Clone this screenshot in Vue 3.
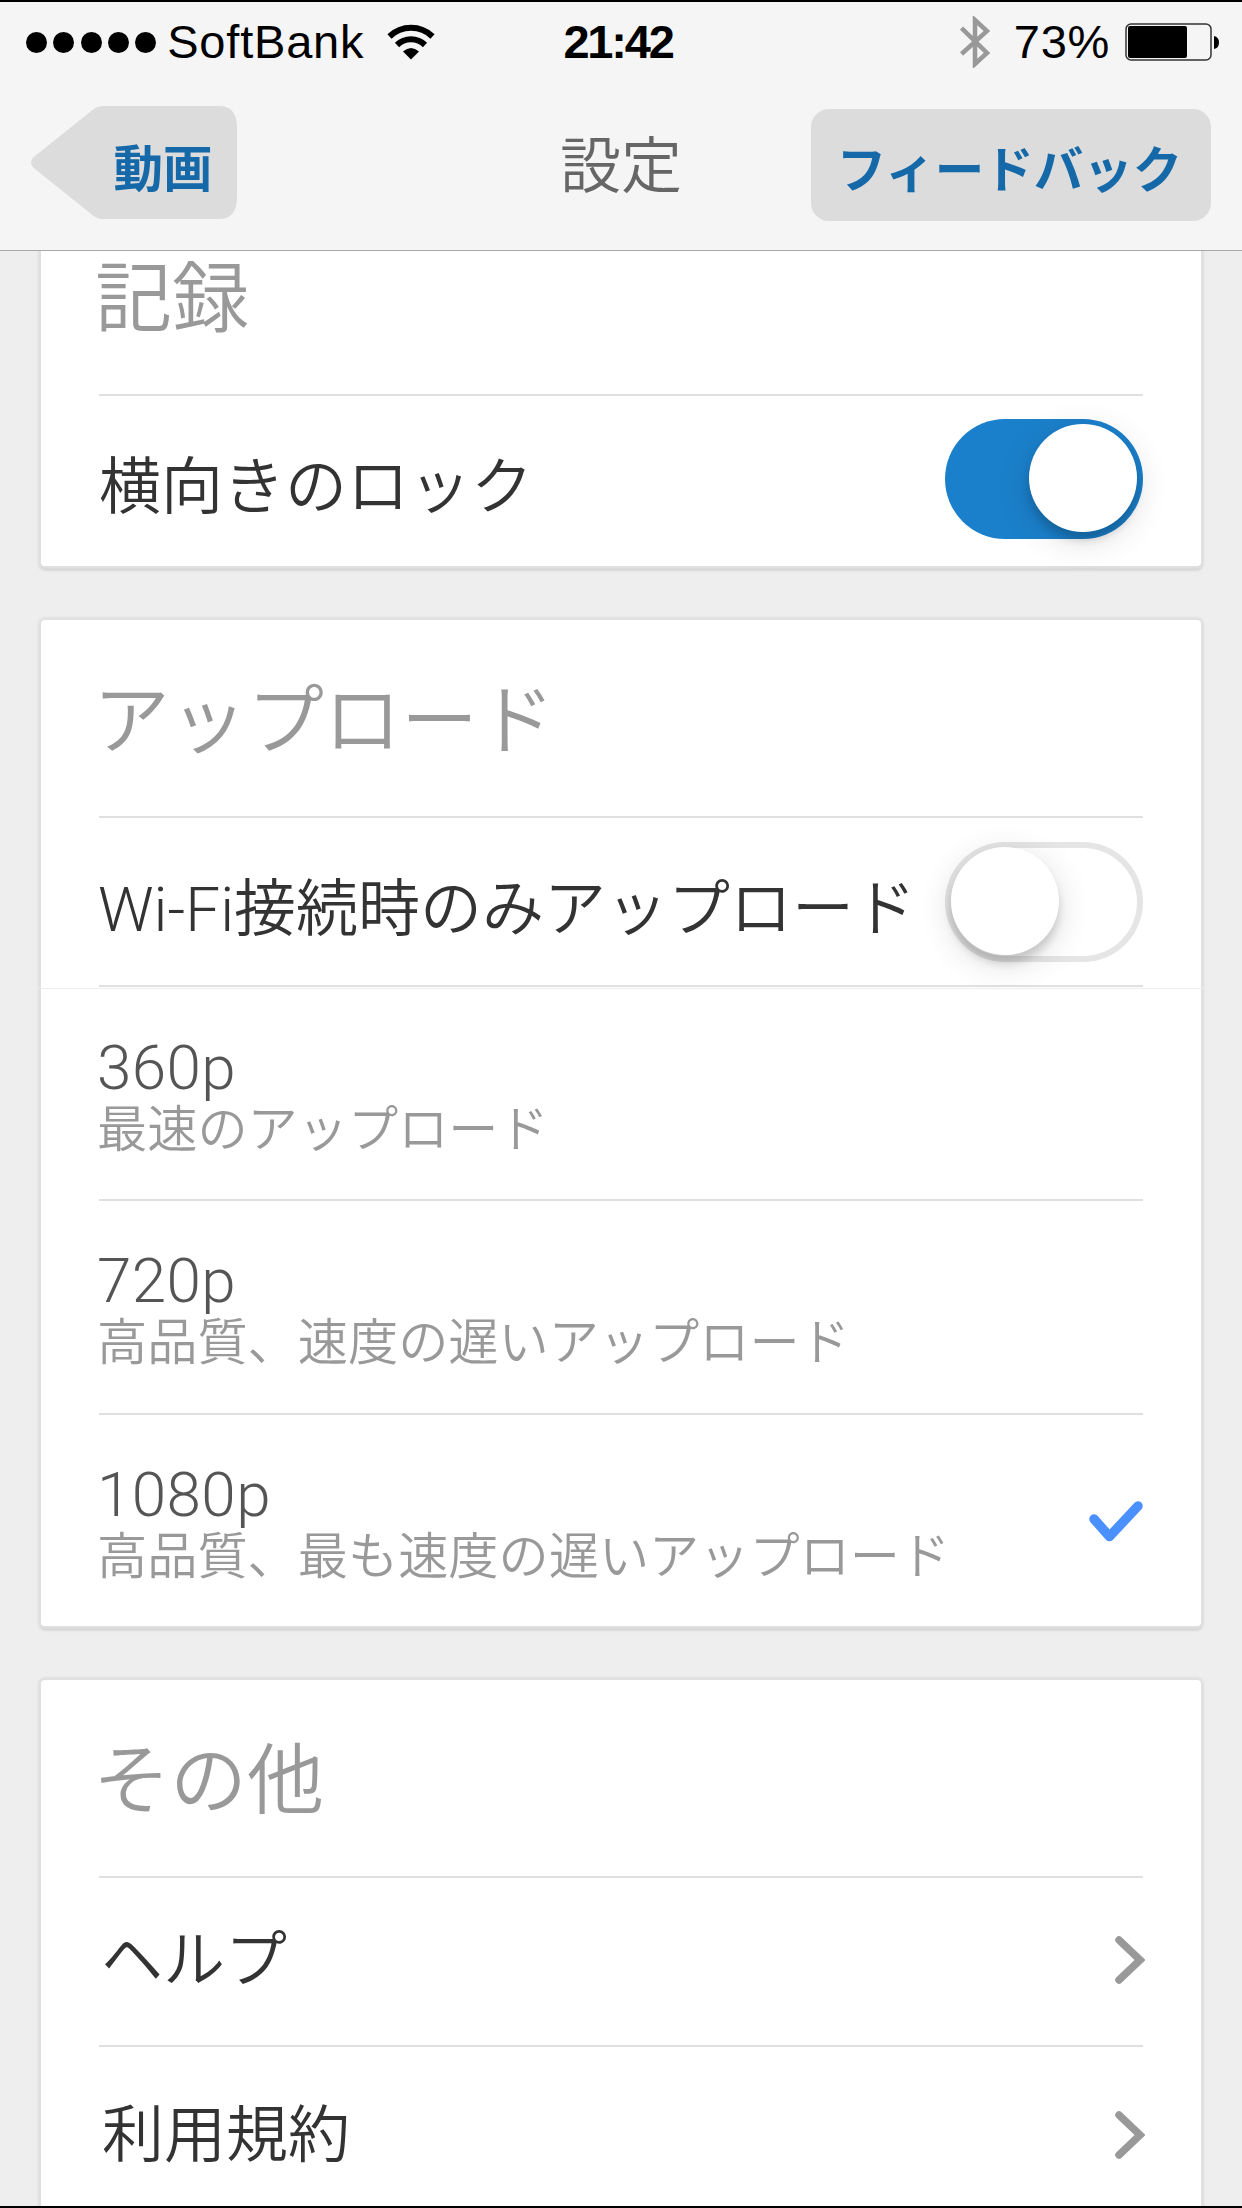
<script setup>
    import {ref} from 'vue'

    const lockLandscape = ref(true)
    const wifiOnly = ref(false)
    const quality = ref('1080p')

    const qualities = [
        {name: '360p', note: '最速のアップロード'},
        {name: '720p', note: '高品質、速度の遅いアップロード'},
        {name: '1080p', note: '高品質、最も速度の遅いアップロード'}
    ]
    const links = ['ヘルプ', '利用規約']
</script>

<template>
    <div class="screen">
        <header>
            <div class="status">
                <div class="carrier">
                    <div class="dots">
                        <i v-for="n in 5" :key="n"></i>
                    </div>
                    <span>SoftBank</span>
                    <svg class="wifi" width="48" height="36" viewBox="0 0 48 36">
                        <path d="M2.500 12.500 A31 31 0 0 1 45.500 12.500" />
                        <path d="M10 21 A20 20 0 0 1 38 21" />
                        <path class="fill" d="M16 27.500 Q24 20.500 32 27.500 L24 35.500 Z" />
                    </svg>
                </div>
                <span class="time">21:42</span>
                <div class="power">
                    <svg class="bluetooth" width="30" height="52" viewBox="0 0 30 52">
                        <path d="M1.500 12 L27 37 L15 48 V4 L27 15 L1.500 38" />
                    </svg>
                    <span>73%</span>
                    <svg width="96" height="38" viewBox="0 0 96 38">
                        <rect x="1" y="1" width="85" height="36" rx="5" fill="none" stroke="#333" stroke-width="1.500" />
                        <rect x="3" y="3" width="59" height="32" rx="2" />
                        <path d="M89 13 Q94 14 94 19.500 Q94 25 89 26 Z" />
                    </svg>
                </div>
            </div>
            <nav>
                <button class="back">
                    <svg width="206" height="113" viewBox="0 0 206 113">
                        <path d="M72 0 H188 Q206 0 206 22 V91 Q206 113 188 113 H72 Q65 113 59 107 L4 63 Q-4 56.500 4 50 L59 6 Q65 0 72 0 Z" fill="#dcdcdc" />
                    </svg>
                    <span>動画</span>
                </button>
                <h1>設定</h1>
                <button class="feedback">フィードバック</button>
            </nav>
        </header>

        <main>
            <section class="card">
                <h2>記録</h2>
                <div class="row">
                    <span>横向きのロック</span>
                    <div class="toggle" :class="{ on: lockLandscape }" @click="lockLandscape = !lockLandscape"><i></i></div>
                </div>
            </section>

            <section class="card">
                <h2>アップロード</h2>
                <div class="row wifi-only">
                    <span>Wi-Fi接続時のみアップロード</span>
                    <div class="toggle" :class="{ on: wifiOnly }" @click="wifiOnly = !wifiOnly"><i></i></div>
                </div>
                <ul>
                    <li v-for="q in qualities" :key="q.name" @click="quality = q.name">
                        <div>
                            <p class="name">{{ q.name }}</p>
                            <p class="note">{{ q.note }}</p>
                        </div>
                        <svg v-if="quality === q.name" class="check" width="54" height="41" viewBox="0 0 54 41">
                            <path d="M5 18 L20.500 35.500 L49 5" />
                        </svg>
                    </li>
                </ul>
            </section>

            <section class="card">
                <h2>その他</h2>
                <div v-for="link in links" :key="link" class="row link">
                    <span>{{ link }}</span>
                    <svg class="chevron" width="30" height="48" viewBox="0 0 30 48">
                        <path d="M4 4 L25 24 L4 44" />
                    </svg>
                </div>
            </section>
        </main>
    </div>
</template>

<style>
    body{
        background: #000;
        overflow: hidden;
    }
</style>

<style scoped>
    *{
        box-sizing: border-box;
        margin: 0;
        padding: 0;
    }

    .screen{
        width: 1242px;
        height: 2208px;
        border-top: 2px solid #000;
        border-bottom: 2px solid #000;
        background: #eee;
        display: flex;
        flex-direction: column;
        overflow: hidden;
        font-family: Roboto, "Noto Sans CJK JP", sans-serif;
        font-weight: 300;
    }

    header{
        height: 249px;
        flex: none;
        background: #f5f5f5;
        border-bottom: 1px solid #a8a8a8;
    }

    .status{
        height: 80px;
        padding: 0 21px 0 26px;
        display: grid;
        grid-template-columns: 1fr auto 1fr;
        align-items: center;
        font-family: "Liberation Sans", sans-serif;
        font-size: 47px;
        font-weight: 400;
        line-height: 80px;
        color: #000;
    }

    .carrier, .power{
        display: flex;
        align-items: center;
    }

    .carrier span{
        letter-spacing: .8px;
    }

    .power{
        justify-content: flex-end;
    }

    .dots{
        display: flex;
        gap: 6.3px;
        margin-right: 11px;
    }

    .dots i{
        width: 21px;
        height: 21px;
        border-radius: 50%;
        background: #000;
    }

    .wifi{
        margin-left: 23px;
    }

    .wifi path{
        fill: none;
        stroke: #000;
        stroke-width: 6;
    }

    .wifi .fill{
        fill: #000;
        stroke: none;
    }

    .time{
        padding-right: 11px;
        font-weight: 700;
        letter-spacing: -2.2px;
    }

    .bluetooth{
        margin-right: 24px;
    }

    .bluetooth path{
        fill: none;
        stroke: #999;
        stroke-width: 4.5;
    }

    .power span{
        margin-right: 15px;
        letter-spacing: .7px;
    }

    nav{
        display: grid;
        grid-template-columns: 1fr auto 1fr;
        align-items: center;
        padding: 24px 31px 0;
    }

    button{
        border: none;
        background: none;
        font-family: inherit;
        font-size: 49.5px;
        font-weight: 700;
        color: #1569a8;
    }

    .back{
        display: grid;
        width: 206px;
        height: 113px;
        margin-bottom: 2px;
    }

    .back svg, .back span{
        grid-area: 1 / 1;
    }

    .back span{
        padding-left: 58px;
        line-height: 129px;
    }

    h1{
        padding-top: 8px;
        font-size: 61px;
        font-weight: 350;
        line-height: 105px;
        color: #666;
    }

    .feedback{
        justify-self: end;
        width: 400px;
        height: 112px;
        margin-top: 2px;
        padding: 3px 3px 0 0;
        border-radius: 18px;
        background: #dcdcdc;
        line-height: 118px;
    }

    main{
        flex: 1;
        min-height: 0;
        padding: 0 41px;
        overflow: hidden;
    }

    .card{
        height: 1006px;
        margin-bottom: 54px;
        padding: 0 58px;
        background: #fff;
        border-radius: 4px;
        box-shadow: 0 0 2px 3px #e0e0e0, 0 3px 3px 1px #c4c4c4;
    }

    .card:first-child{
        height: 369px;
        margin-top: -54px;
    }

    h2{
        height: 198px;
        border-bottom: 2px solid #e0e0e0;
        font-size: 77px;
        font-weight: 350;
        line-height: 204px;
        text-indent: -6px;
        color: #999;
    }

    .card:first-child h2{
        height: 199px;
        line-height: 206px;
        text-indent: -4px;
    }

    .row{
        height: 169px;
        padding-bottom: 3px;
        display: flex;
        justify-content: space-between;
        align-items: center;
        font-size: 62px;
        font-weight: 350;
        line-height: 100px;
        color: #333;
        white-space: nowrap;
    }

    .row span{
        padding-top: 18px;
    }

    .wifi-only{
        padding-bottom: 0;
        border-bottom: 2px solid #e0e0e0;
    }

    .wifi-only span{
        margin-left: -1px;
        padding-top: 16px;
    }

    .link{
        padding-left: 2px;
        border-bottom: 2px solid #e0e0e0;
    }

    .link:last-child{
        height: 178px;
        padding: 0 0 0 3px;
    }

    .link span{
        padding-top: 2px;
    }

    .toggle{
        flex: none;
        width: 198px;
        height: 120px;
        padding: 5px 6px;
        border-radius: 60px;
        box-shadow: inset 0 0 0 6px #e5e5e5;
        display: flex;
    }

    .toggle i{
        width: 108px;
        height: 108px;
        border-radius: 50%;
        background: #fff;
        box-shadow: 0 8px 8px rgba(0, 0, 0, .15), 0 8px 34px rgba(0, 0, 0, .14);
    }

    .on{
        background: #1b80cb;
        box-shadow: none;
        justify-content: flex-end;
    }

    ul{
        list-style: none;
        margin: 1px -61px 0;
        padding: 0 61px;
        border-top: 1px solid #eee;
    }

    li{
        height: 213.5px;
        display: flex;
        justify-content: space-between;
        align-items: center;
        border-bottom: 2px solid #e0e0e0;
    }

    li:first-child{
        height: 212px;
    }

    li div{
        padding-top: 11px;
    }

    li:last-child{
        border-bottom: none;
    }

    .name{
        margin-left: -2px;
        font-size: 62px;
        line-height: 61px;
        letter-spacing: .4px;
        color: #555;
    }

    .note{
        margin-left: -2px;
        font-size: 50.2px;
        font-weight: 350;
        line-height: 64px;
        color: #999;
    }

    .check path{
        fill: none;
        stroke: #4a90ff;
        stroke-width: 9.5;
        stroke-linecap: round;
        stroke-linejoin: round;
    }

    .chevron{
        margin-right: -2px;
    }

    .chevron path{
        fill: none;
        stroke: #999;
        stroke-width: 7.5;
        stroke-linecap: round;
    }
</style>
